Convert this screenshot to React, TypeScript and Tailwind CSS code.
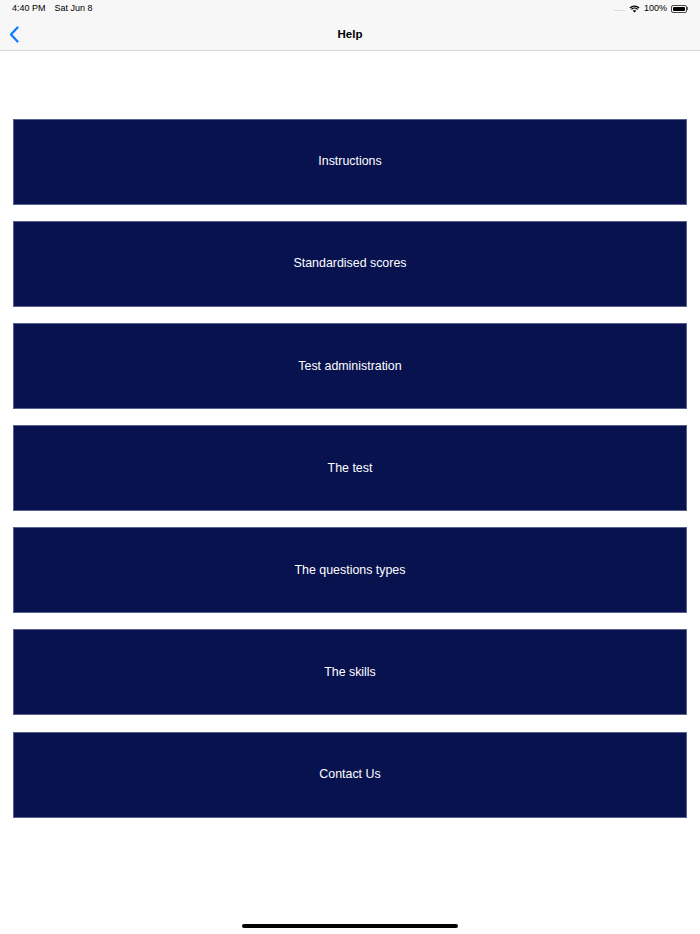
import React from 'react';

const items = [
  'Instructions',
  'Standardised scores',
  'Test administration',
  'The test',
  'The questions types',
  'The skills',
  'Contact Us',
];

export default function App() {
  return (
    <div
      className="relative w-[700px] h-[934px] bg-white overflow-hidden"
      style={{ fontFamily: '"Liberation Sans", Arial, sans-serif' }}
    >
      {/* status + nav bar */}
      <div className="bg-[#f7f7f7] border-b border-[#d9d9d9] h-[51px]">
        <div className="flex items-center justify-between h-[17px] px-[12px] text-[9px] text-black">
          <div className="flex gap-[9px]">
            <span>4:40 PM</span>
            <span>Sat Jun 8</span>
          </div>
          <div className="flex items-center gap-[4px]">
            <span className="text-[#a0a0a0] tracking-[0px] text-[8px] leading-none">.....</span>
            <svg width="11" height="8" viewBox="0 0 11 8">
              <path d="M5.5 7.6 L3.8 5.8 A2.5 2.5 0 0 1 7.2 5.8 Z" fill="#000" />
              <path d="M2.4 4.5 A4.4 4.4 0 0 1 8.6 4.5" stroke="#000" strokeWidth="1.2" fill="none" />
              <path d="M0.9 3 A6.6 6.6 0 0 1 10.1 3" stroke="#000" strokeWidth="1.2" fill="none" />
            </svg>
            <span>100%</span>
            <div className="flex items-center">
              <div className="w-[16px] h-[8px] rounded-[2px] border border-black/70 p-[1px]">
                <div className="w-full h-full bg-black rounded-[1px]" />
              </div>
              <div className="w-[1px] h-[3px] bg-black/60" />
            </div>
          </div>
        </div>
        <div className="relative h-[34px] flex items-center justify-center pt-[1px]">
          <svg
            className="absolute left-[9px] top-[9px]"
            width="10"
            height="17"
            viewBox="0 0 10 17"
          >
            <path d="M8.5 1.5 L2 8.5 L8.5 15.5" stroke="#0a7aff" strokeWidth="2.2" fill="none" strokeLinecap="round" strokeLinejoin="round" />
          </svg>
          <span className="text-[11.5px] font-bold text-black">Help</span>
        </div>
      </div>

      {/* buttons */}
      <div className="flex flex-col gap-[16.2px] px-[13px] pt-[67.5px]">
        {items.map((label) => (
          <button
            key={label}
            className="h-[86px] w-full bg-[#08124f] border border-[#5a608e] text-white text-[12.4px] flex items-center justify-center"
          >
            {label}
          </button>
        ))}
      </div>

      {/* home indicator */}
      <div className="absolute left-[242px] top-[924px] w-[216px] h-[4px] rounded-full bg-black" />
    </div>
  );
}
